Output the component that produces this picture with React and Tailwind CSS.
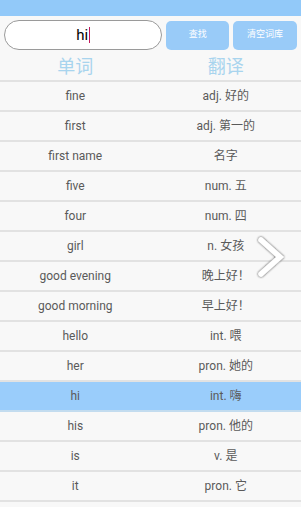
import React from "react";

const rows = [
  ["fine", "adj. 好的"],
  ["first", "adj. 第一的"],
  ["first name", "名字"],
  ["five", "num. 五"],
  ["four", "num. 四"],
  ["girl", "n. 女孩"],
  ["good evening", "晚上好！"],
  ["good morning", "早上好！"],
  ["hello", "int. 喂"],
  ["her", "pron. 她的"],
  ["hi", "int. 嗨"],
  ["his", "pron. 他的"],
  ["is", "v. 是"],
  ["it", "pron. 它"],
  ["", ""],
];

export default function App() {
  return (
    <div
      className="relative w-[301px] h-[507px] overflow-hidden bg-[#f8f8f8] text-[#5a5a5a]"
      style={{ fontFamily: 'Roboto, "Noto Sans CJK SC", sans-serif' }}
    >
      <div className="h-[16px] bg-[#92c9f9]" />
      <div className="flex items-center gap-[4px] px-[4px] pt-[4px]">
        <div className="w-[159px] h-[30px] rounded-full border border-[#9a9a9a] bg-white flex items-center justify-center">
          <span className="text-[15px] text-black leading-none">hi</span>
          <span className="w-[1px] h-[16px] bg-[#c2185b] ml-[1px]" />
        </div>
        <div className="w-[63px] h-[29px] rounded-[5px] bg-[#99cbf8] flex items-center justify-center text-white text-[9px]">
          查找
        </div>
        <div className="w-[64px] h-[29px] rounded-[5px] bg-[#99cbf8] flex items-center justify-center text-white text-[9px]">
          清空词库
        </div>
      </div>
      <div className="grid grid-cols-2 h-[32px] items-center text-center text-[18px] text-[#a8d4ee] border-b-2 border-[#e2e2e2] leading-none pt-[3px]">
        <span>单词</span>
        <span>翻译</span>
      </div>
      {rows.map(([w, t], i) => (
        <div
          key={i}
          className={`grid grid-cols-2 h-[30px] items-center text-center text-[12px] border-b-2 ${
            w === "hi" ? "bg-[#9acdfb] border-[#c3dcef]" : "border-[#e2e2e2]"
          }`}
        >
          <span>{w}</span>
          <span>{t}</span>
        </div>
      ))}
      <svg
        className="absolute left-[255px] top-[235px]"
        width="32"
        height="44"
        viewBox="0 0 32 44"
      >
        <defs>
          <filter id="sh" x="-50%" y="-50%" width="200%" height="200%">
            <feDropShadow dx="0" dy="0" stdDeviation="1" floodColor="#222" floodOpacity="1" />
          </filter>
        </defs>
        <polyline
          points="6,5 25,22 6,39"
          fill="none"
          stroke="#ffffff"
          strokeWidth="5.5"
          strokeLinecap="round"
          strokeLinejoin="miter"
          filter="url(#sh)"
        />
      </svg>
    </div>
  );
}
